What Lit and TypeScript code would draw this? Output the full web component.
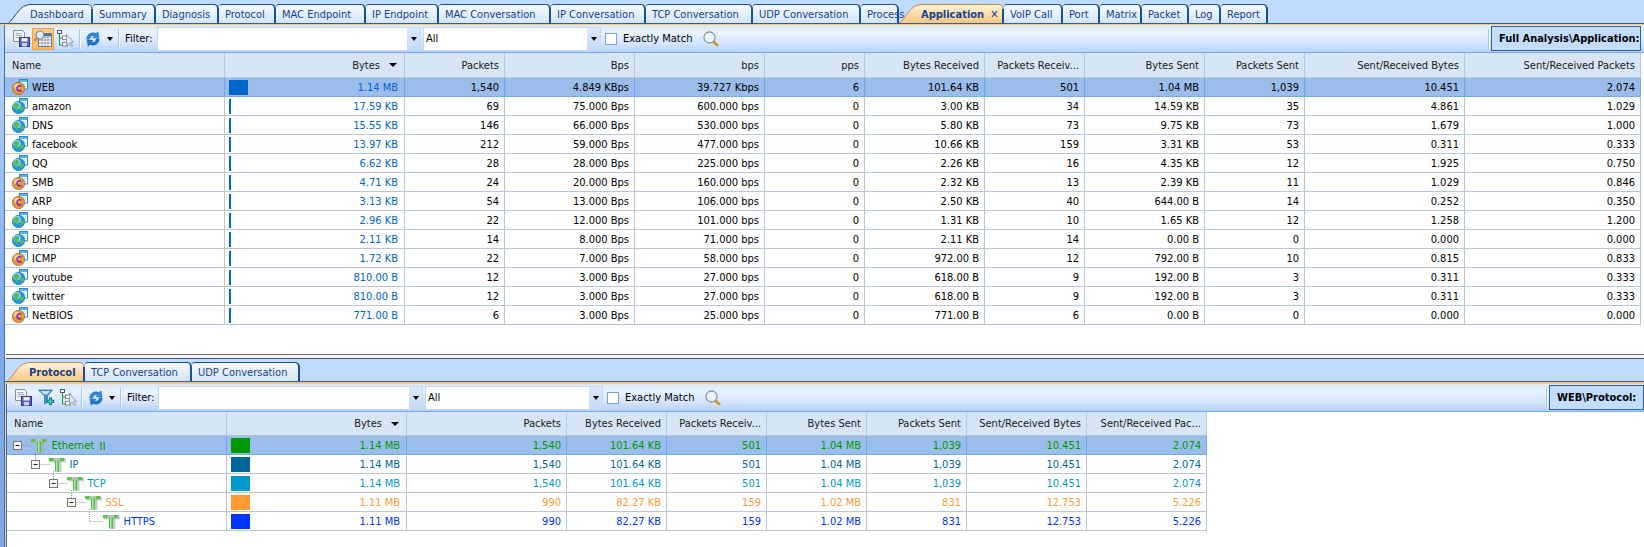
import { LitElement, html, css, svg } from "lit";
import { customElement } from "lit/decorators.js";

type Tab = { t: string; w: number; active?: boolean; slant?: boolean; close?: boolean };

const TOP_TABS: Tab[] = [
  { t: "Dashboard", w: 85, slant: true },
  { t: "Summary", w: 63 },
  { t: "Diagnosis", w: 63 },
  { t: "Protocol", w: 57 },
  { t: "MAC Endpoint", w: 90 },
  { t: "IP Endpoint", w: 73 },
  { t: "MAC Conversation", w: 112 },
  { t: "IP Conversation", w: 95 },
  { t: "TCP Conversation", w: 107 },
  { t: "UDP Conversation", w: 108 },
  { t: "Process", w: 38 },
  { t: "Application", w: 105, active: true, slant: true, close: true },
  { t: "VoIP Call", w: 59 },
  { t: "Port", w: 37 },
  { t: "Matrix", w: 42 },
  { t: "Packet", w: 47 },
  { t: "Log", w: 32 },
  { t: "Report", w: 47 },
];
const BOTTOM_TABS: Tab[] = [
  { t: "Protocol", w: 78, active: true, slant: true },
  { t: "TCP Conversation", w: 107 },
  { t: "UDP Conversation", w: 108 },
];

const TOP_COLS = [220, 180, 100, 130, 130, 100, 120, 100, 120, 100, 160, 176];
const TOP_HEAD = ["Name", "Bytes", "Packets", "Bps", "bps", "pps", "Bytes Received", "Packets Receiv...", "Bytes Sent", "Packets Sent", "Sent/Received Bytes", "Sent/Received Packets"];
const TOP_ROWS: { kind: "web" | "net"; bar: number; c: string[] }[] = [
  { kind: "web", bar: 19, c: ["WEB", "1.14 MB", "1,540", "4.849 KBps", "39.727 Kbps", "6", "101.64 KB", "501", "1.04 MB", "1,039", "10.451", "2.074"] },
  { kind: "net", bar: 2, c: ["amazon", "17.59 KB", "69", "75.000 Bps", "600.000 bps", "0", "3.00 KB", "34", "14.59 KB", "35", "4.861", "1.029"] },
  { kind: "net", bar: 2, c: ["DNS", "15.55 KB", "146", "66.000 Bps", "530.000 bps", "0", "5.80 KB", "73", "9.75 KB", "73", "1.679", "1.000"] },
  { kind: "net", bar: 2, c: ["facebook", "13.97 KB", "212", "59.000 Bps", "477.000 bps", "0", "10.66 KB", "159", "3.31 KB", "53", "0.311", "0.333"] },
  { kind: "net", bar: 2, c: ["QQ", "6.62 KB", "28", "28.000 Bps", "225.000 bps", "0", "2.26 KB", "16", "4.35 KB", "12", "1.925", "0.750"] },
  { kind: "web", bar: 2, c: ["SMB", "4.71 KB", "24", "20.000 Bps", "160.000 bps", "0", "2.32 KB", "13", "2.39 KB", "11", "1.029", "0.846"] },
  { kind: "web", bar: 2, c: ["ARP", "3.13 KB", "54", "13.000 Bps", "106.000 bps", "0", "2.50 KB", "40", "644.00 B", "14", "0.252", "0.350"] },
  { kind: "net", bar: 2, c: ["bing", "2.96 KB", "22", "12.000 Bps", "101.000 bps", "0", "1.31 KB", "10", "1.65 KB", "12", "1.258", "1.200"] },
  { kind: "net", bar: 2, c: ["DHCP", "2.11 KB", "14", "8.000 Bps", "71.000 bps", "0", "2.11 KB", "14", "0.00 B", "0", "0.000", "0.000"] },
  { kind: "web", bar: 2, c: ["ICMP", "1.72 KB", "22", "7.000 Bps", "58.000 bps", "0", "972.00 B", "12", "792.00 B", "10", "0.815", "0.833"] },
  { kind: "net", bar: 2, c: ["youtube", "810.00 B", "12", "3.000 Bps", "27.000 bps", "0", "618.00 B", "9", "192.00 B", "3", "0.311", "0.333"] },
  { kind: "net", bar: 2, c: ["twitter", "810.00 B", "12", "3.000 Bps", "27.000 bps", "0", "618.00 B", "9", "192.00 B", "3", "0.311", "0.333"] },
  { kind: "web", bar: 2, c: ["NetBIOS", "771.00 B", "6", "3.000 Bps", "25.000 bps", "0", "771.00 B", "6", "0.00 B", "0", "0.000", "0.000"] },
];

const BOT_COLS = [220, 180, 160, 100, 100, 100, 100, 120, 120];
const BOT_HEAD = ["Name", "Bytes", "Packets", "Bytes Received", "Packets Receiv...", "Bytes Sent", "Packets Sent", "Sent/Received Bytes", "Sent/Received Pac..."];
const BOT_ROWS = [
  { lvl: 0, color: "#009900", c: ["Ethernet Ⅱ", "1.14 MB", "1,540", "101.64 KB", "501", "1.04 MB", "1,039", "10.451", "2.074"] },
  { lvl: 1, color: "#006699", c: ["IP", "1.14 MB", "1,540", "101.64 KB", "501", "1.04 MB", "1,039", "10.451", "2.074"] },
  { lvl: 2, color: "#0099cc", c: ["TCP", "1.14 MB", "1,540", "101.64 KB", "501", "1.04 MB", "1,039", "10.451", "2.074"] },
  { lvl: 3, color: "#ff9933", c: ["SSL", "1.11 MB", "990", "82.27 KB", "159", "1.02 MB", "831", "12.753", "5.226"] },
  { lvl: 4, color: "#0033ff", c: ["HTTPS", "1.11 MB", "990", "82.27 KB", "159", "1.02 MB", "831", "12.753", "5.226"] },
];

function rowIcon(kind: "web" | "net") {
  const win = svg`<rect x="7.500" y="0.500" width="8" height="9.500" fill="#fff" stroke="#2b8ccf"/><rect x="8" y="1" width="7" height="2" fill="#5db5ea"/><path d="M10 5h4M10 7h4" stroke="#9fd0ee"/>`;
  if (kind === "net") {
    return html`<svg class="ri" width="16" height="16" viewBox="0 0 16 16">
      ${win}
      <circle cx="6.500" cy="9.500" r="6.200" fill="#2596dc" stroke="#1268a8" stroke-width=".6"/>
      <circle cx="5" cy="7.500" r="3.800" fill="#9be0f8" opacity=".75"/>
      <path d="M2.800 5.500c2.200-1.200 4 -.2 4.200 1.500s-1.500 2.300-1.200 4-1.800 1.600-2.800-.3S1.600 6.500 2.800 5.500zM9 9c1.500-.6 3-.2 3 .9s-1.700 3.600-2.800 3.200-1.200-3.600-.2-4.100z" fill="#55bb4c"/>
    </svg>`;
  }
  return html`<svg class="ri" width="16" height="16" viewBox="0 0 16 16">
    ${win}
    <circle cx="6.500" cy="9.500" r="6.200" fill="#e8963a" stroke="#8a5a20" stroke-width=".6"/>
    <circle cx="5" cy="7.500" r="2.800" fill="#fbe0a4" opacity=".85"/>
    <path d="M10 6.500C7.200 4.800 3.600 7 4.400 10.200c.6 2.400 3.500 3.300 5.600 2l-1.100-1.500c-1.100.6-2.500.2-2.800-1-.4-1.600 1.300-2.800 2.800-2z" fill="#8a2bb0"/>
  </svg>`;
}

function treeIcon(lvl: number) {
  const x = 10.5 + 18 * lvl;
  const w = x + 34;
  const leaf = lvl === 4;
  const tx = x + 14;
  return html`<svg class="tree" width=${w} height="18" viewBox="0 0 ${w} 18">
    <g stroke="#9a9a9a" stroke-dasharray="1 1" fill="none">
      ${lvl > 0 ? svg`<path d=${`M${x} 0V${leaf ? 9.5 : 5}`}/>` : ""}
      <path d=${`M${x + (leaf ? 0 : 5)} 9.500H${tx}`}/>
      ${!leaf ? svg`<path d=${`M${x + 18} 16V18`}/>` : ""}
    </g>
    ${!leaf
      ? svg`<rect x=${x - 4} y="5.500" width="8" height="8" fill="#f6f6f6" stroke="#777"/><path d=${`M${x - 2} 9.500h4`} stroke="#222"/>`
      : ""}
    <g transform="translate(${tx - 0.5} 3)">
      <rect x="1" y="1" width="16" height="3.500" fill="#bbb" opacity=".6"/>
      <rect x="8" y="3" width="4.500" height="11" fill="#aaa" opacity=".6"/>
      <rect x="0" y="0" width="15.500" height="3.200" fill="#5cc24a"/>
      <rect x="4.500" y="0" width="6.500" height="3.200" fill="#b9c4ba"/>
      <rect x="6" y="2.500" width="4" height="11" fill="#4fbf45"/>
      <rect x="7.200" y="2.500" width="1.200" height="11" fill="#c9f0c0"/>
    </g>
  </svg>`;
}

const saveIcon = html`<svg width="17" height="17" viewBox="0 0 17 17">
  <path d="M.5.500h9l2 2v9H.5z" fill="#f4f4f4" stroke="#8d8d8d"/>
  <path d="M2.500 3.500h6M2.500 5.500h7M2.500 7.500h7" stroke="#9ab"/>
  <rect x="6.500" y="7.500" width="10" height="9" fill="#5a62b8" stroke="#343a80"/>
  <rect x="8.500" y="8" width="6" height="3.500" fill="#e8ecf6"/>
  <rect x="9" y="13" width="5" height="3.500" fill="#c9cfe6"/>
</svg>`;

const gridFind = html`<svg width="18" height="17" viewBox="0 0 18 17">
  <rect x="4.500" y="3.500" width="13" height="13" fill="#fff" stroke="#6a7a90"/>
  <path d="M5 7h12M5 10h12M5 13h12M8 4v12M11 4v12M14 4v12" stroke="#9a9aa8"/>
  <rect x="5" y="4" width="12" height="2" fill="#4a74b0"/>
  <circle cx="6" cy="5" r="4" fill="#dcecf8" stroke="#7a8797" stroke-width="1.200"/>
  <path d="M3 8L.5 11" stroke="#c08a3a" stroke-width="2.200"/>
</svg>`;

const treeCursor = html`<svg width="17" height="17" viewBox="0 0 17 17">
  <path d="M2.500 3v12h3M2.500 8h3" stroke="#1f9a3a" fill="none"/>
  <rect x=".5" y=".5" width="4" height="3" fill="#fff" stroke="#556"/>
  <rect x="5.500" y="6" width="5" height="3.500" fill="#fff" stroke="#889"/>
  <rect x="5.500" y="12.500" width="5" height="3.500" fill="#fff" stroke="#889"/>
  <path d="M9.500 4.500v11l2.500-2.500 2 3.500 1.500-1-2-3.200h3z" fill="#e6e8ee" stroke="#7f8a9c" stroke-width=".8"/>
</svg>`;

const filterPlus = html`<svg width="17" height="17" viewBox="0 0 17 17">
  <path d="M.5 1h14L9.500 7v6l-3 2V7z" fill="#3f8fd0" stroke="#2a6ca8" stroke-width=".7"/>
  <path d="M2.500 2h10L9 5.500H6z" fill="#bfe2f8"/>
  <path d="M12.500 8.500v7.500M8.800 12.300h7.500" stroke="#137e7a" stroke-width="3.200"/>
  <path d="M12.500 9.500v5.500M9.800 12.300h5.500" stroke="#4fd0c0" stroke-width="1.200"/>
</svg>`;

const refreshIcon = html`<svg width="14" height="16" viewBox="0 0 14 16">
  <path d="M.8 8C.8 3.500 5.500.3 10 2.600L12 .8l1 6.400-6.200-.5L8.700 5C6.300 4 3.800 5.400 3.800 8z" fill="#2a8ce0" stroke="#1a5fa8" stroke-width=".5"/>
  <path d="M13.200 8c0 4.500-4.700 7.700-9.200 5.400L2 15.200 1 8.800l6.200.5L5.300 11c2.400 1 4.900-.4 4.900-3z" fill="#1c78cc" stroke="#1a5fa8" stroke-width=".5"/>
</svg>`;

const magnifier = html`<svg width="16" height="16" viewBox="0 0 16 16">
  <circle cx="6.500" cy="6.500" r="5.500" fill="#e8f2fb" stroke="#8c98a4" stroke-width="1.300"/>
  <path d="M3.500 6a3.500 3.500 0 0 1 3-3" stroke="#fff" fill="none"/>
  <path d="M10.800 11l3.200 3" stroke="#c79b2e" stroke-width="3" stroke-linecap="round"/>
</svg>`;

@customElement("app-root")
export class AppRoot extends LitElement {
  static styles = css`
    :host {
      display: block;
      width: 1644px;
      height: 547px;
      overflow: hidden;
      background: #fff;
      font-family: "DejaVu Sans Condensed", "DejaVu Sans", sans-serif;
      font-stretch: condensed;
      font-size: 11px;
      color: #000;
    }
    .root { display: flex; flex-direction: column; height: 547px; }
    .strip {
      flex: none;
      display: flex;
      align-items: flex-end;
      background: #bfdbff;
      border-bottom: 1px solid #2f5f9e;
    }
    .strip.top { height: 23px; padding-left: 8px; }
    .strip.low { height: 22px; padding-left: 2px; }
    .accent { flex: none; height: 1px; background: #fbc67b; }
    .low-accent { height: 2px; }
    .tab {
      position: relative;
      flex: none;
      height: 19px;
      box-sizing: border-box;
      padding: 2px 0 0 6px;
      line-height: 15px;
      white-space: nowrap;
      color: #15428b;
      background: linear-gradient(#f6faff, #d3e4fb);
      border-top: 1px solid #1a4f9c;
      border-right: 2px solid #1a4f9c;
      border-top-right-radius: 5px;
      border-top-left-radius: 3px;
    }
    .tab.slant {
      z-index: 0;
      background: none;
      border: 0;
      padding: 3px 0 0 22px;
    }
    .tab.slant.act { z-index: 2; font-weight: 700; }
    .tab svg.shape { position: absolute; left: 0; top: 0; z-index: -1; }
    .tab .x { margin-left: 6px; font-weight: 400; color: #15428b; font-size: 11px; }
    .body { flex: 1; display: flex; min-height: 0; }
    .rail {
      flex: none;
      width: 4px;
      background: linear-gradient(#bcd6f8, #7da8e8 60%, #7da8e8);
      border-right: 1px solid #3f6fb3;
    }
    .main { flex: 1; min-width: 0; display: flex; flex-direction: column; }
    .pane-top { flex: none; height: 329px; display: flex; flex-direction: column; overflow: hidden; }
    .splitter {
      flex: none;
      height: 5px;
      box-sizing: border-box;
      border-top: 1px solid #6a6a6a;
      border-bottom: 1px solid #4f5b6b;
      background: #f2f4f8;
      margin-left: 1px;
    }
    .pane-low { flex: 1; display: flex; flex-direction: column; min-height: 0; }
    .low-body {
      flex: 1;
      min-height: 0;
      display: flex;
      flex-direction: column;
      border-left: 1px solid #fbc67b;
      padding-left: 1px;
      background: linear-gradient(90deg, #3f6fb3 1px, #fff 1px);
      overflow: hidden;
    }
    .toolbar {
      flex: none;
      height: 28px;
      box-sizing: border-box;
      display: flex;
      align-items: center;
      background: linear-gradient(#dbe8fc 0, #e9f2ff 30%, #d8e7fd 62%, #b6d1fa 100%);
      border-bottom: 1px solid #7aa8e6;
    }
    .tb-btn { flex: none; width: 22px; height: 22px; display: flex; align-items: center; justify-content: center; box-sizing: border-box; }
    .tb-btn.on { background: linear-gradient(#fcd08e, #f9b868); border: 1px solid #f2a03e; }
    .sep { flex: none; width: 1px; height: 20px; background: #a9c6ee; box-shadow: 1px 0 0 #f4f8ff; }
    .tri { width: 0; height: 0; border: 3px solid transparent; border-top: 4px solid #000; border-bottom: 0; }
    .filter { flex: none; width: 28px; margin-left: 6px; }
    .combo {
      flex: none;
      height: 24px;
      box-sizing: border-box;
      background: #fff;
      border: 1px solid #c4d8f2;
      display: flex;
      align-items: center;
      padding-left: 2px;
    }
    .combo .val { flex: 1; }
    .combo .drop {
      flex: none;
      width: 13px;
      height: 22px;
      background: linear-gradient(#dbe8fa, #c6dbf7);
      display: flex;
      align-items: center;
      justify-content: center;
    }
    .check { flex: none; width: 12px; height: 12px; border: 1px solid #7aa2d8; background: #fff; box-sizing: border-box; margin: 0 6px 0 4px; }
    .exact { flex: none; width: 72px; white-space: nowrap; }
    .mag { flex: none; margin-left: 8px; display: flex; }
    .spring { flex: 1; }
    .crumb {
      flex: none;
      box-sizing: border-box;
      height: 25px;
      display: flex;
      align-items: center;
      margin-left: 2px;
      padding-left: 7px;
      font-weight: 700;
      background: #c4dcfc;
      border: 1px solid #2f6098;
      white-space: nowrap;
      overflow: hidden;
    }
    .row { display: flex; flex: none; align-self: flex-start; }
    .head { background: #d5e5f6; border-bottom: 1px solid #b3c3d8; box-sizing: border-box; }
    .head.t { height: 25px; }
    .head.b { height: 24px; }
    .hc {
      flex: none;
      box-sizing: border-box;
      display: flex;
      align-items: center;
      justify-content: flex-end;
      padding: 0 5px;
      border-right: 1px solid #b9c9dc;
      white-space: nowrap;
      color: #1a1a1a;
    }
    .hc.name { justify-content: flex-start; padding-left: 7px; }
    .hc .sort { margin-left: 9px; margin-right: 2px; border-width: 4px; border-top-width: 4px; border-bottom: 0; }
    .dr { height: 19px; box-sizing: border-box; border-bottom: 1px solid #bac5d9; }
    .dr.sel { background: #9bbdeb; border-bottom-color: #72a8ee; }
    .c {
      flex: none;
      box-sizing: border-box;
      display: flex;
      align-items: center;
      justify-content: flex-end;
      padding-right: 5px;
      border-right: 1px solid #bac5d9;
      white-space: nowrap;
    }
    .dr.sel .c { border-right-color: #72a8ee; }
    .c.name { justify-content: flex-start; padding: 0 0 0 7px; }
    .c.name .ri { flex: none; margin-right: 4px; }
    .c.tn { padding: 0; }
    .tree { flex: none; display: block; }
    .c.bytes { padding-right: 6px; }
    .meter { flex: none; height: 15px; margin-right: auto; margin-left: 4px; }
    .c.sw .meter { width: 19px; }
    .blue { color: #0066cc; }
    .cjk { font-family: "Noto Sans CJK SC", sans-serif; margin-left: 3px; }
  `;

  tabShape(w: number, h: number, active: boolean, id: string) {
    const d = `M0.5 ${h}C6 ${h - 4} 11 3 18 1.500Q20 .5 23 .5H${w - 6}Q${w - 1} .5 ${w - 1} 5V${h}`;
    return html`<svg class="shape" width=${w} height=${h} viewBox="0 0 ${w} ${h}">
      <defs><linearGradient id=${id} x1="0" y1="0" x2="0" y2="1">
        ${active
          ? svg`<stop offset="0" stop-color="#fff3df"/><stop offset="1" stop-color="#fbc67b"/>`
          : svg`<stop offset="0" stop-color="#f6faff"/><stop offset="1" stop-color="#d3e4fb"/>`}
      </linearGradient></defs>
      <path d=${d} fill="url(#${id})" stroke=${active ? "#c28a3f" : "#1a4f9c"} stroke-width="1"/>
      <path d=${`M${w - 1} 5V${h}`} stroke="#1a4f9c" stroke-width="2"/>
    </svg>`;
  }

  renderTabs(tabs: Tab[], prefix: string, h: number) {
    return tabs.map((t, i) => html`<div
      class="tab ${t.slant ? "slant" : ""} ${t.active ? "act" : ""}"
      style="width:${t.w}px"
    >
      ${t.slant ? this.tabShape(t.w, h, !!t.active, `${prefix}${i}`) : ""}${t.t}${t.close ? html`<span class="x">✕</span>` : ""}
    </div>`);
  }

  renderToolbar(low: boolean) {
    const second = low ? filterPlus : gridFind;
    const crumb = low ? "WEB\\Protocol:" : "Full Analysis\\Application:";
    return html`<div class="toolbar">
      <div class="tb-btn" style="margin-left:5px">${saveIcon}</div>
      <div class="tb-btn ${low ? "" : "on"}" style="margin-left:${low ? 1 : 0}px">${second}</div>
      <div class="tb-btn">${treeCursor}</div>
      <div class="sep" style="margin-left:${low ? 2 : 3}px"></div>
      <div class="tb-btn" style="margin-left:${low ? 3 : 2}px">${refreshIcon}</div>
      <div class="tri" style="margin-left:${low ? 2 : 3}px"></div>
      <div class="sep" style="margin-left:5px"></div>
      <div class="filter">Filter:</div>
      <div class="combo" style="width:${low ? 265 : 264}px;margin-left:${low ? 3 : 4}px"><div class="val"></div><div class="drop"><div class="tri"></div></div></div>
      <div class="combo" style="width:178px;margin-left:2px"><div class="val">All</div><div class="drop"><div class="tri"></div></div></div>
      <div class="check"></div>
      <div class="exact">Exactly Match</div>
      <div class="mag">${magnifier}</div>
      <div class="spring"></div>
      <div class="sep"></div>
      <div class="crumb" style="width:${low ? 95 : 150}px">${crumb}</div>
      ${low ? "" : html`<div style="width:3px"></div>`}
    </div>`;
  }

  head(cols: number[], labels: string[], cls: string) {
    return html`<div class="row head ${cls}">
      ${labels.map((l, i) => html`<div class="hc ${i === 0 ? "name" : ""}" style="width:${cols[i]}px">
        ${l}${i === 1 ? html`<span class="tri sort"></span>` : ""}
      </div>`)}
    </div>`;
  }

  treeName(v: string) {
    if (!v.includes("Ⅱ")) return v;
    return html`${v.replace(" Ⅱ", "")}<span class="cjk">Ⅱ</span>`;
  }

  render() {
    return html`<div class="root">
      <div class="strip top">${this.renderTabs(TOP_TABS, "t", 19)}</div>
      <div class="accent"></div>
      <div class="body">
        <div class="rail"></div>
        <div class="main">
          <div class="pane-top">
            ${this.renderToolbar(false)}
            ${this.head(TOP_COLS, TOP_HEAD, "t")}
            ${TOP_ROWS.map((r, ri) => html`<div class="row dr ${ri === 0 ? "sel" : ""}">
              ${r.c.map((v, i) => {
                if (i === 0) return html`<div class="c name" style="width:${TOP_COLS[0]}px">${rowIcon(r.kind)}${v}</div>`;
                if (i === 1) return html`<div class="c bytes blue" style="width:${TOP_COLS[1]}px">
                  <div class="meter" style="width:${r.bar}px;background:#0066cc"></div>${v}
                </div>`;
                return html`<div class="c" style="width:${TOP_COLS[i]}px">${v}</div>`;
              })}
            </div>`)}
          </div>
          <div class="splitter"></div>
          <div class="pane-low">
            <div class="strip low">${this.renderTabs(BOTTOM_TABS, "b", 19)}</div>
            <div class="accent low-accent"></div>
            <div class="low-body">
              ${this.renderToolbar(true)}
              ${this.head(BOT_COLS, BOT_HEAD, "b")}
              ${BOT_ROWS.map((r, ri) => html`<div class="row dr ${ri === 0 ? "sel" : ""}" style="color:${r.color}">
                ${r.c.map((v, i) => {
                  if (i === 0) return html`<div class="c name tn" style="width:${BOT_COLS[0]}px">${treeIcon(r.lvl)}${this.treeName(v)}</div>`;
                  if (i === 1) return html`<div class="c bytes sw" style="width:${BOT_COLS[1]}px">
                    <div class="meter" style="background:${r.color}"></div>${v}
                  </div>`;
                  return html`<div class="c" style="width:${BOT_COLS[i]}px">${v}</div>`;
                })}
              </div>`)}
            </div>
          </div>
        </div>
      </div>
    </div>`;
  }
}
